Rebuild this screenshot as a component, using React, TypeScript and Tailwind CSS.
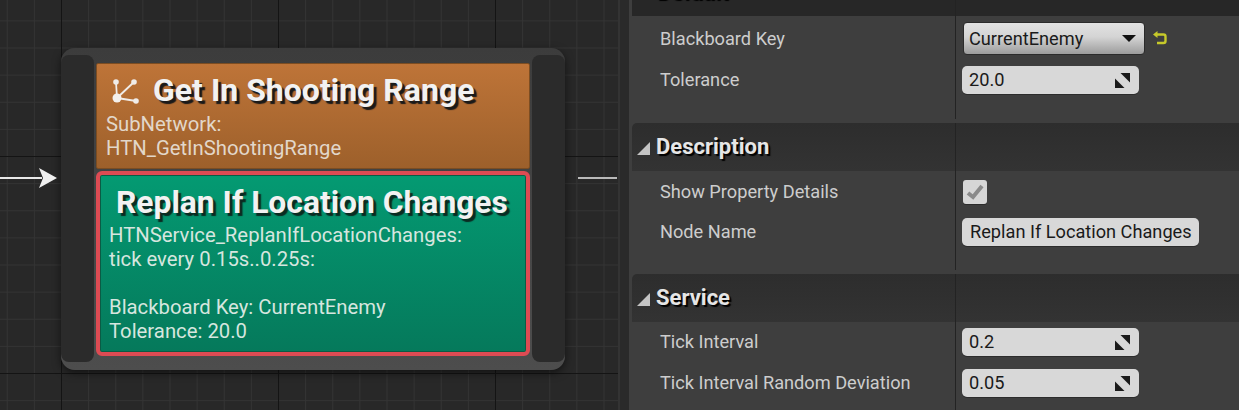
const roboto = 'font-["Roboto",sans-serif]';

function DragIcon() {
  return (
    <svg width="15" height="15" viewBox="0 0 15 15" className="shrink-0">
      <polygon points="5.5,0 15,0 15,9.5" fill="#1a1a1a" />
      <polygon points="0,5.5 9.5,15 0,15" fill="#1a1a1a" />
    </svg>
  );
}

function NumberInput({ value }: { value: string }) {
  return (
    <div className="flex h-[28px] w-[177px] items-center justify-between rounded-[5px] bg-[#d8d8d8] pl-[7px] pr-[9px] text-[18.2px] text-[#1a1a1a] shadow-[0_1px_0_#2c2c2c]">
      <span>{value}</span>
      <DragIcon />
    </div>
  );
}

function Row({
  label,
  children,
  className,
}: {
  label: string;
  children: React.ReactNode;
  className: string;
}) {
  return (
    <div className={`flex shrink-0 ${className}`}>
      <div className="flex w-[323px] items-center pl-[28px] text-[18.2px] text-[#cdcdcd]">
        {label}
      </div>
      <div className="flex flex-1 items-center border-l border-[#232323] pl-[6px]">
        {children}
      </div>
    </div>
  );
}

function Header({ title, top }: { title: string; top?: boolean }) {
  return (
    <div
      className={`flex h-[48px] shrink-0 rounded-tl-[5px] ${
        top ? 'mt-[-32px] bg-[#272727]' : 'bg-[linear-gradient(#2d2d2d,#333333)]'
      }`}
    >
      <div className="flex w-[323px] items-center">
        <svg width="13" height="13" viewBox="0 0 13 13" className="ml-[5px] mt-[3px]">
          <polygon points="13,0 13,13 0,13" fill="#c4c4c4" />
        </svg>
        <span className="mb-px ml-[6px] text-[22px] font-bold leading-none text-[#e6e6e6] [text-shadow:2px_2px_1px_#000]">
          {title}
        </span>
      </div>
      <div className="flex-1 border-l border-[#232323]" />
    </div>
  );
}

function Spacer({ h }: { h: string }) {
  return (
    <div className={`flex shrink-0 ${h}`}>
      <div className="w-[323px]" />
      <div className="mb-[4px] flex-1 border-l border-[#232323]" />
    </div>
  );
}

function DetailsPanel() {
  return (
    <div className="flex flex-1 flex-col overflow-hidden bg-[#3e3e3e] pl-[3px]">
      <Header title="Default" top />
      <Row label="Blackboard Key" className="h-[45px]">
        <div className="ml-px flex h-[33px] w-[182px] items-center justify-between rounded-[4px] border border-[#2b2b2b] bg-[linear-gradient(#e2e2e2_0%,#d4d4d4_45%,#9c9c9c_100%)] pl-[5px] pr-[8px] text-[18.2px] text-[#1a1a1a]">
          <span>CurrentEnemy</span>
          <svg width="14" height="7" viewBox="0 0 14 7">
            <polygon points="0,0 14,0 7,7" fill="#111111" />
          </svg>
        </div>
        <svg width="14" height="14" viewBox="0 0 14 14" fill="none" className="ml-[8px] mb-[1px]">
          <path d="M2 3.5 H10.5 Q12.5 3.5 12.5 5.5 V10 Q12.5 12 10.5 12 H4" stroke="#c6c92a" strokeWidth="2.4" />
          <polygon points="0,3.5 4.5,0 4.5,7" fill="#c6c92a" />
        </svg>
      </Row>
      <Row label="Tolerance" className="h-[38px]">
        <NumberInput value="20.0" />
      </Row>
      <Spacer h="h-[24px]" />

      <Header title="Description" />
      <Row label="Show Property Details" className="h-[42px]">
        <div className="ml-px flex h-[24px] w-[24px] items-center justify-center rounded-[3px] bg-[#d6d6d6] shadow-[0_1px_0_#2c2c2c]">
          <svg width="18" height="16" viewBox="0 0 18 16" fill="none">
            <path d="M2 9 L7 13 L16 2" stroke="#8a8a8a" strokeWidth="4" />
          </svg>
        </div>
      </Row>
      <Row label="Node Name" className="h-[38px]">
        <div className="flex h-[28px] w-[237px] items-center rounded-[5px] bg-[#d8d8d8] pl-[8px] text-[18.2px] text-[#1a1a1a] shadow-[0_1px_0_#2c2c2c]">
          Replan If Location Changes
        </div>
      </Row>
      <Spacer h="h-[23px]" />

      <Header title="Service" />
      <Row label="Tick Interval" className="h-[40px]">
        <NumberInput value="0.2" />
      </Row>
      <Row label="Tick Interval Random Deviation" className="h-[42px]">
        <NumberInput value="0.05" />
      </Row>
      <Spacer h="h-[10px]" />
    </div>
  );
}

function BehaviorNode() {
  return (
    <div className="absolute left-[61px] top-[48px] flex h-[322px] w-[504px] items-stretch rounded-[14px] bg-[linear-gradient(#3c3c3c,#4d4d4d)] pt-[7px] pb-[8px] shadow-[0_3px_8px_rgba(0,0,0,0.55)]">
      <div className="w-[33px] rounded-[8px] bg-[#2b2b2b]" />
      <div className="mx-[2px] flex flex-1 flex-col pt-[8px]">
        {/* Sub network task */}
        <div className="h-[106px] rounded-[2px] border border-[#7c4d22] bg-[linear-gradient(#be7438,#9d602b)] pl-[9px] pt-[6px]">
          <div className="flex items-center">
            <svg width="32" height="32" viewBox="0 0 32 32" fill="none" className="ml-[4px]">
              <g stroke="#f0ece8" strokeWidth="1.8">
                <line x1="7" y1="24" x2="6" y2="8" />
                <line x1="7" y1="24" x2="24" y2="8" />
                <line x1="7" y1="24" x2="26" y2="27" />
              </g>
              <circle cx="7" cy="24" r="4.5" fill="#f4f0ec" />
              <circle cx="6" cy="8" r="2.8" fill="#f0ece8" />
              <circle cx="24" cy="8" r="2.8" fill="#f0ece8" />
              <circle cx="26" cy="27" r="2.8" fill="#f0ece8" />
            </svg>
            <span className="ml-[11px] text-[32px] font-bold leading-[40px] text-[#f2f2f2] [text-shadow:3px_3px_1px_#1a1a1a]">
              Get In Shooting Range
            </span>
          </div>
          <div className="mt-[2px] text-[20.3px] leading-[24px] text-[#e2d7ca]">
            SubNetwork:
            <br />
            HTN_GetInShootingRange
          </div>
        </div>
        {/* Service */}
        <div className="mt-[2px] h-[185px] rounded-[6px] border-[4px] border-[#dd4b53] bg-[linear-gradient(#049a72,#05795b)] pl-[9px] pt-[7px] shadow-[inset_0_0_0_1px_#0a5c45]">
          <div className="pl-[7px] text-[31.8px] font-bold leading-[40px] text-[#f2f2f2] [text-shadow:3px_3px_1px_#0b2b22]">
            Replan If Location Changes
          </div>
          <div className="mt-px text-[20.3px] leading-[24px] text-[#d6e6df]">
            HTNService_ReplanIfLocationChanges:
            <br />
            tick every 0.15s..0.25s:
            <br />
            <br />
            Blackboard Key: CurrentEnemy
            <br />
            Tolerance: 20.0
          </div>
        </div>
      </div>
      <div className="w-[33px] rounded-[8px] bg-[#2b2b2b]" />
    </div>
  );
}

export default function App() {
  return (
    <div className={`flex h-[410px] w-[1239px] overflow-hidden bg-[#2a2a2a] ${roboto}`}>
      <div className="relative h-full w-[618px] bg-[#282828] bg-[linear-gradient(#141414_1px,transparent_1px),linear-gradient(90deg,#141414_1px,transparent_1px),linear-gradient(#343434_1px,transparent_1px),linear-gradient(90deg,#343434_1px,transparent_1px)] [background-size:217px_217px,217px_217px,27.125px_27.125px,27.125px_27.125px] [background-position:61px_156px,61px_156px,6.75px_20.4px,6.75px_20.4px]">
        <BehaviorNode />
        {/* Wires */}
        <div className="absolute left-0 top-[177px] h-[2px] w-[42px] bg-[#e8e8e8]" />
        <svg width="18" height="20" viewBox="0 0 18 20" className="absolute left-[39px] top-[168px]">
          <polygon points="0,0 18,10 0,20 4,10" fill="#f0f0f0" />
        </svg>
        <div className="absolute left-[578px] top-[177px] h-[2px] w-[39px] bg-[#b9b9b9]" />
      </div>
      <div className="flex w-[11px] border-l-2 border-[#333333] bg-[#2a2a2a]" />
      <DetailsPanel />
    </div>
  );
}
